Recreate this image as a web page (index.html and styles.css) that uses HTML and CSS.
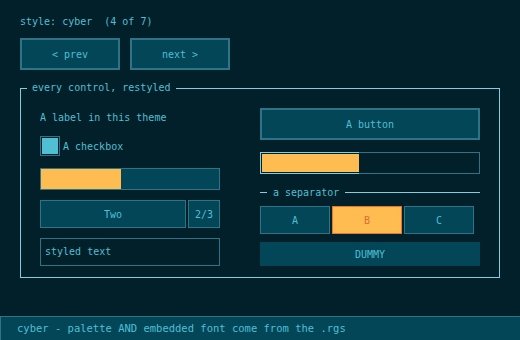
FILE: index.html
```html
<!DOCTYPE html>
<html>
<head>
    <meta charset="utf-8">
    <title>cyber style</title>
    <link rel="stylesheet" href="styles.css">
</head>
<body>
    <div class="screen">
        <div class="top">
            <div class="title">style: cyber &nbsp;(4 of 7)</div>
            <div class="nav">
                <button class="btn nav-btn">&lt; prev</button>
                <button class="btn nav-btn">next &gt;</button>
            </div>

            <div class="group">
                <span class="group-title">every control, restyled</span>
                <div class="col left">
                    <div class="label">A label in this theme</div>
                    <div class="check-row">
                        <span class="checkbox"><span class="tick"></span></span>
                        <span>A checkbox</span>
                    </div>
                    <div class="slider"><div class="slider-fill" style="width: 45%"></div></div>
                    <div class="spinner">
                        <div class="spin-value">Two</div>
                        <div class="spin-count">2/3</div>
                    </div>
                    <div class="textbox">styled text</div>
                </div>

                <div class="col right">
                    <button class="btn big-btn">A button</button>
                    <div class="progress"><div class="progress-fill" style="width: 45%"></div></div>
                    <div class="separator">
                        <span class="sep-line short"></span>
                        <span class="sep-text">a separator</span>
                        <span class="sep-line"></span>
                    </div>
                    <div class="toggles">
                        <div class="toggle">A</div>
                        <div class="toggle active">B</div>
                        <div class="toggle">C</div>
                    </div>
                    <div class="dummy">DUMMY</div>
                </div>
            </div>
        </div>

        <div class="status">cyber - palette AND embedded font come from the .rgs</div>
    </div>
</body>
</html>
```

FILE: styles.css
```css
body, html {
    margin: 0;
    height: 100%;
    background: #02202a;
}

.screen {
    width: 520px;
    height: 340px;
    display: flex;
    flex-direction: column;
    font-family: "DejaVu Sans Mono", monospace;
    font-size: 10px;
    color: #51bfd3;
}

.top {
    padding: 16px 20px 0 20px;
}

.title {
    height: 12px;
    line-height: 12px;
}

.nav {
    display: flex;
    gap: 10px;
    margin-top: 10px;
}

.btn {
    font-family: inherit;
    font-size: 10px;
    color: #51bfd3;
    background: #024658;
    border: 2px solid #2f7486;
    padding: 0;
    cursor: pointer;
}

.nav-btn {
    width: 100px;
    height: 32px;
}

.group {
    position: relative;
    margin-top: 18px;
    width: 480px;
    height: 190px;
    box-sizing: border-box;
    border: 1px solid #82cde0;
    padding: 19px 19px 0 19px;
    display: flex;
    justify-content: space-between;
}

/* title sits over the top border */
.group-title {
    position: absolute;
    left: 6px;
    top: -7px;
    padding: 0 6px 0 5px;
    line-height: 12px;
    background: #02202a;
}

.col {
    display: flex;
    flex-direction: column;
}

.left {
    width: 180px;
}

.right {
    width: 220px;
}

.label {
    height: 20px;
    line-height: 20px;
}

.check-row {
    display: flex;
    align-items: center;
    gap: 3px;
    margin-top: 8px;
    height: 20px;
}

.checkbox {
    width: 20px;
    height: 20px;
    box-sizing: border-box;
    border: 1px solid #2f7486;
    padding: 1px;
}

.tick {
    display: block;
    width: 100%;
    height: 100%;
    background: #51bfd3;
}

.slider {
    margin-top: 12px;
    height: 22px;
    box-sizing: border-box;
    border: 1px solid #2f7486;
    background: #024658;
}

.slider-fill {
    height: 100%;
    background: #ffbc51;
}

.spinner {
    display: flex;
    gap: 2px;
    margin-top: 10px;
    height: 28px;
}

.spin-value, .spin-count {
    box-sizing: border-box;
    border: 1px solid #2f7486;
    background: #024658;
    display: flex;
    align-items: center;
    justify-content: center;
}

.spin-value {
    flex: 1;
}

.spin-count {
    width: 32px;
}

.textbox {
    margin-top: 10px;
    height: 28px;
    box-sizing: border-box;
    border: 1px solid #2f7486;
    padding-left: 4px;
    line-height: 26px;
}

.big-btn {
    height: 32px;
    width: 100%;
}

.progress {
    margin-top: 12px;
    height: 22px;
    box-sizing: border-box;
    border: 1px solid #2f7486;
    padding: 1px;
    position: relative;
}

.progress::before {
    content: "";
    position: absolute;
    left: -1px;
    top: -1px;
    bottom: -1px;
    width: 45%;
    border: 1px solid #82cde0;
    border-right: none;
}

.progress-fill {
    height: 100%;
    background: #ffbc51;
}

.separator {
    display: flex;
    align-items: center;
    margin-top: 10px;
    height: 16px;
}

.sep-line {
    flex: 1;
    height: 1px;
    background: #82cde0;
}

.sep-line.short {
    flex: none;
    width: 7px;
}

.sep-text {
    padding: 0 6px;
}

.toggles {
    display: flex;
    gap: 2px;
    margin-top: 6px;
    height: 28px;
}

.toggle {
    width: 70px;
    box-sizing: border-box;
    border: 1px solid #2f7486;
    background: #024658;
    display: flex;
    align-items: center;
    justify-content: center;
}

.toggle.active {
    background: #ffbc51;
    border-color: #eb7630;
    color: #d86f36;
}

.dummy {
    margin-top: 8px;
    height: 24px;
    background: #024658;
    display: flex;
    align-items: center;
    justify-content: center;
}

.status {
    margin-top: auto;
    height: 24px;
    box-sizing: border-box;
    border: 1px solid #2f7486;
    border-bottom: none;
    border-right: none;
    background: #024658;
    padding-left: 16px;
    line-height: 23px;
    font-size: 10.5px;
}
```
